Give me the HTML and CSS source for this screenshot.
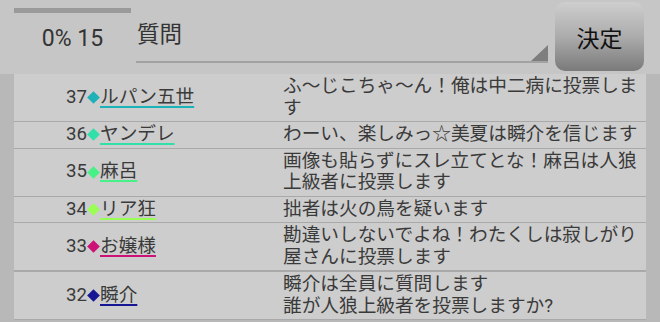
FILE: index.html
```html
<!DOCTYPE html>
<html lang="ja">
<head>
<meta charset="utf-8">
<link rel="stylesheet" href="styles.css">
</head>
<body>
<div class="top">
  <div class="status">
    <div class="bar"></div>
    <div class="pct">0% 15</div>
  </div>
  <div class="field"><span class="field-text">質問</span></div>
  <div class="btn">決定</div>
</div>
<div class="list-wrap">
  <div class="list">
    <div class="row">
      <div class="who"><span class="num">37</span><span class="dia c1"></span><span class="name c1">ルパン五世</span></div>
      <div class="msg">ふ〜じこちゃ〜ん！俺は中二病に投票します</div>
    </div>
    <div class="row">
      <div class="who"><span class="num">36</span><span class="dia c2"></span><span class="name c2">ヤンデレ</span></div>
      <div class="msg">わーい、楽しみっ☆美夏は瞬介を信じます</div>
    </div>
    <div class="row">
      <div class="who"><span class="num">35</span><span class="dia c3"></span><span class="name c3">麻呂</span></div>
      <div class="msg">画像も貼らずにスレ立てとな！麻呂は人狼上級者に投票します</div>
    </div>
    <div class="row">
      <div class="who"><span class="num">34</span><span class="dia c4"></span><span class="name c4">リア狂</span></div>
      <div class="msg">拙者は火の鳥を疑います</div>
    </div>
    <div class="row thick">
      <div class="who"><span class="num">33</span><span class="dia c5"></span><span class="name c5">お嬢様</span></div>
      <div class="msg">勘違いしないでよね！わたくしは寂しがり屋さんに投票します</div>
    </div>
    <div class="row">
      <div class="who"><span class="num">32</span><span class="dia c6"></span><span class="name c6">瞬介</span></div>
      <div class="msg">瞬介は全員に質問します<br>誰が人狼上級者を投票しますか?</div>
    </div>
  </div>
</div>
</body>
</html>
```
FILE: styles.css
```css
html, body {
  margin: 0;
  padding: 0;
}
body {
  width: 660px;
  height: 322px;
  overflow: hidden;
  background: #c6c6c6;
  font-family: Roboto, "Noto Sans CJK JP", sans-serif;
  color: #3a3a3a;
}
.top {
  display: flex;
  height: 74px;
}
.status {
  margin-left: 14px;
  width: 117px;
}
.bar {
  margin-top: 8px;
  height: 5px;
  background: #9a9a9a;
}
.pct {
  margin-top: 12px;
  text-align: center;
  font-size: 23px;
  line-height: 28px;
  color: #333;
}
.field {
  position: relative;
  margin-left: 5px;
  width: 412px;
  height: 63px;
  box-sizing: border-box;
  border-bottom: 2px solid #a2a2a2;
  padding-top: 22px;
  padding-left: 1px;
  font-size: 22.5px;
  line-height: 24px;
  color: #333;
}
.field::after {
  content: "";
  position: absolute;
  right: 0;
  bottom: 0;
  width: 0;
  height: 0;
  border-style: solid;
  border-width: 0 0 16px 17px;
  border-color: transparent transparent #7e7e7e transparent;
}
.btn {
  margin-left: 7px;
  margin-top: 2px;
  width: 89px;
  height: 69px;
  box-sizing: border-box;
  border-radius: 10px;
  background: linear-gradient(#cecece, #acacac 50%, #7a7a7a);
  display: flex;
  align-items: center;
  justify-content: center;
  font-size: 23px;
  color: #111;
}
.list-wrap {
  background: #b8b8b8;
  padding: 0 14px;
  height: 248px;
}
.list {
  background: #cdcdcd;
  font-size: 18.67px;
  line-height: 21.5px;
}
.row {
  display: flex;
  padding: 2px 0;
  border-bottom: 1px solid #a9a9a9;
}
.row.thick {
  border-bottom-width: 2px;
}
.who {
  width: 269px;
  box-sizing: border-box;
  padding-left: 52px;
  display: flex;
  align-items: center;
}
.dia {
  display: inline-block;
  width: 9px;
  height: 9px;
  margin: 0 2px 0 2px;
  transform: rotate(45deg);
}
.name {
  text-decoration: underline;
  text-decoration-thickness: 2px;
  text-underline-offset: 3px;
  color: #3a3a3a;
}
.msg {
  width: 360px;
  color: #3a3a3a;
}
.dia.c1 { background: #1fb0b8; }
.name.c1 { text-decoration-color: #1ab4b8; }
.dia.c2 { background: #30e0a8; }
.name.c2 { text-decoration-color: #30e0a8; }
.dia.c3 { background: #48f088; }
.name.c3 { text-decoration-color: #48f088; }
.dia.c4 { background: #99ff55; }
.name.c4 { text-decoration-color: #99ff55; }
.dia.c5 { background: #cc1177; }
.name.c5 { text-decoration-color: #cc1177; }
.dia.c6 { background: #161694; }
.name.c6 { text-decoration-color: #161694; }
```
